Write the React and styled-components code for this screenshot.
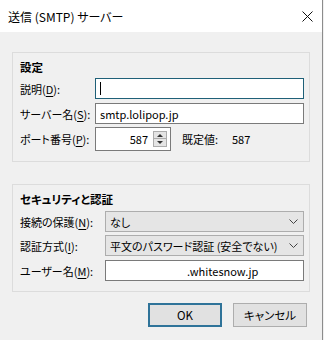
import React from 'react';
import styled, { createGlobalStyle } from 'styled-components';

const GlobalStyle = createGlobalStyle`
  html, body {
    margin: 0;
    padding: 0;
    background: #f0f0f0;
  }
  body {
    font-family: "Noto Sans CJK JP", "Noto Sans", sans-serif;
    font-size: 11px;
    color: #000;
    font-feature-settings: "palt";
  }
`;

const Window = styled.div`
  width: 323px;
  height: 340px;
  box-sizing: border-box;
  border-right: 1px solid #8c8c8c;
  background: #f0f0f0;
`;

const TitleBar = styled.div`
  height: 32px;
  background: #fff;
  display: flex;
  align-items: center;
  justify-content: space-between;
  padding: 0 9px 0 8px;
  font-size: 12px;
`;

const Body = styled.div`
  padding: 20px 0 0 12px;
`;

const Group = styled.div`
  width: 298px;
  box-sizing: border-box;
  border: 1px solid #dcdcdc;
  padding: 6px 5px 10px 7px;
  & + & {
    margin-top: 22px;
  }
`;

const GroupTitle = styled.div`
  font-weight: bold;
  font-size: 11.5px;
  height: 16px;
  line-height: 16px;
`;

const Row = styled.div`
  display: grid;
  grid-template-columns: ${p => p.$label}px 1fr;
  align-items: center;
  height: ${p => p.$h || 21}px;
  margin-top: ${p => p.$mt}px;
`;

const Label = styled.span`
  white-space: nowrap;
  u {
    text-underline-offset: 2px;
  }
`;

const TextBox = styled.div`
  height: 100%;
  box-sizing: border-box;
  border: 1px solid ${p => (p.$focus ? '#1f6078' : '#7a7a7a')};
  background: #fff;
  display: flex;
  align-items: center;
  white-space: nowrap;
  padding-left: ${p => p.$indent || 4}px;
`;

const Caret = styled.span`
  width: 1px;
  height: 13px;
  background: #000;
`;

const FieldLine = styled.div`
  display: flex;
  align-items: center;
  height: 100%;
`;

const SpinBox = styled.div`
  width: 76px;
  height: 100%;
  box-sizing: border-box;
  border: 1px solid #7a7a7a;
  background: #fff;
  display: flex;
  align-items: center;
  justify-content: flex-end;
  padding-right: 3px;
`;

const SpinValue = styled.span`
  margin-right: 5px;
`;

const SpinButtons = styled.div`
  display: flex;
  flex-direction: column;
  width: 14px;
`;

const SpinButton = styled.div`
  height: 8px;
  box-sizing: border-box;
  border: 1px solid #adadad;
  background: #e5e5e5;
  display: flex;
  align-items: center;
  justify-content: center;
  & + & {
    margin-top: -1px;
    height: 9px;
  }
  &::after {
    content: '';
    border-left: 3px solid transparent;
    border-right: 3px solid transparent;
    ${p => (p.$down ? 'border-top: 3px solid #333;' : 'border-bottom: 3px solid #333;')}
  }
`;

const DefaultLabel = styled.span`
  margin-left: 11px;
  width: 50px;
`;

const Select = styled.div`
  height: 100%;
  box-sizing: border-box;
  border: 1px solid #adadad;
  background: #e5e5e5;
  display: flex;
  align-items: center;
  justify-content: space-between;
  white-space: nowrap;
  padding: 0 5px 0 4px;
`;

const Footer = styled.div`
  display: flex;
  justify-content: flex-end;
  gap: 11px;
  margin-top: 11px;
  padding-right: 15px;
`;

const Button = styled.button`
  width: 74px;
  height: 24px;
  box-sizing: border-box;
  border: ${p => (p.$primary ? '2px solid #2f7399' : '1px solid #adadad')};
  background: #e1e1e1;
  font-family: inherit;
  font-size: 11.5px;
  font-feature-settings: "palt";
  color: #000;
  padding: 0;
`;

const Chevron = () => (
  <svg width="9" height="5" viewBox="0 0 9 5">
    <polyline points="0.5,0.5 4.5,4.5 8.5,0.5" fill="none" stroke="#444" strokeWidth="1" />
  </svg>
);

const CloseIcon = () => (
  <svg width="11" height="11" viewBox="0 0 11 11">
    <path d="M0.5 0.5 L10.5 10.5 M10.5 0.5 L0.5 10.5" stroke="#111" strokeWidth="1" />
  </svg>
);

export default function App() {
  return (
    <>
      <GlobalStyle />
      <Window>
        <TitleBar>
          <span>送信 (SMTP) サーバー</span>
          <CloseIcon />
        </TitleBar>
        <Body>
          <Group>
            <GroupTitle>設定</GroupTitle>
            <Row $label={75} $mt={3}>
              <Label>説明(<u>D</u>):</Label>
              <TextBox $focus>
                <Caret />
              </TextBox>
            </Row>
            <Row $label={75} $mt={4}>
              <Label>サーバー名(<u>S</u>):</Label>
              <TextBox>smtp.lolipop.jp</TextBox>
            </Row>
            <Row $label={75} $mt={3} $h={24}>
              <Label>ポート番号(<u>P</u>):</Label>
              <FieldLine>
                <SpinBox>
                  <SpinValue>587</SpinValue>
                  <SpinButtons>
                    <SpinButton />
                    <SpinButton $down />
                  </SpinButtons>
                </SpinBox>
                <DefaultLabel>既定値:</DefaultLabel>
                <span>587</span>
              </FieldLine>
            </Row>
          </Group>
          <Group>
            <GroupTitle>セキュリティと認証</GroupTitle>
            <Row $label={85} $mt={4}>
              <Label>接続の保護(<u>N</u>):</Label>
              <Select>
                <span>なし</span>
                <Chevron />
              </Select>
            </Row>
            <Row $label={85} $mt={3}>
              <Label>認証方式(<u>I</u>):</Label>
              <Select>
                <span>平文のパスワード認証 (安全でない)</span>
                <Chevron />
              </Select>
            </Row>
            <Row $label={85} $mt={4}>
              <Label>ユーザー名(<u>M</u>):</Label>
              <TextBox $indent={81}>.whitesnow.jp</TextBox>
            </Row>
          </Group>
          <Footer>
            <Button $primary>OK</Button>
            <Button>キャンセル</Button>
          </Footer>
        </Body>
      </Window>
    </>
  );
}
